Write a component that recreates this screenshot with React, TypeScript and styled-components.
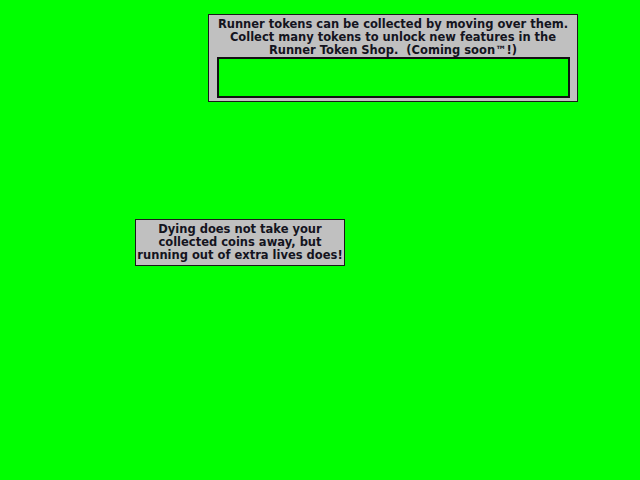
import React from "react";
import styled, { createGlobalStyle } from "styled-components";

const Global = createGlobalStyle`
  html, body { margin: 0; padding: 0; background: #00ff00; }
  body { width: 640px; height: 480px; overflow: hidden; }
`;

const Stage = styled.div`
  width: 640px;
  height: 480px;
  display: flex;
  flex-direction: column;
  align-items: flex-start;
  font-family: "DejaVu Sans", Verdana, sans-serif;
  font-weight: bold;
  font-size: 11.5px;
  color: #14141e;
`;

const Panel = styled.div<{ $left: number; $top: number; $w: number; $pad: string }>`
  margin-left: ${(p) => p.$left}px;
  margin-top: ${(p) => p.$top}px;
  width: ${(p) => p.$w}px;
  padding: ${(p) => p.$pad};
  box-sizing: border-box;
  background: #c0c0c0;
  border: 1px solid #1a1a1a;
  display: flex;
  flex-direction: column;
  align-items: center;
`;

const Message = styled.div<{ $lh: number }>`
  text-align: center;
  line-height: ${(p) => p.$lh}px;
  white-space: pre;
`;

const TokenSlot = styled.div`
  align-self: stretch;
  margin: 0 7px 3px 8px;
  height: 41px;
  box-sizing: border-box;
  background: #00ff00;
  border: 2px solid #111;
`;

export default function App() {
  return (
    <>
      <Global />
      <Stage>
        <Panel $left={208} $top={14} $w={370} $pad="3px 0 0">
          <Message $lh={13}>
            {"Runner tokens can be collected by moving over them.\nCollect many tokens to unlock new features in the\nRunner Token Shop.  (Coming soon\u2122!)"}
          </Message>
          <TokenSlot />
        </Panel>
        <Panel $left={135} $top={117} $w={210} $pad="3px 0 3px">
          <Message $lh={13}>
            {"Dying does not take your\ncollected coins away, but\nrunning out of extra lives does!"}
          </Message>
        </Panel>
      </Stage>
    </>
  );
}
